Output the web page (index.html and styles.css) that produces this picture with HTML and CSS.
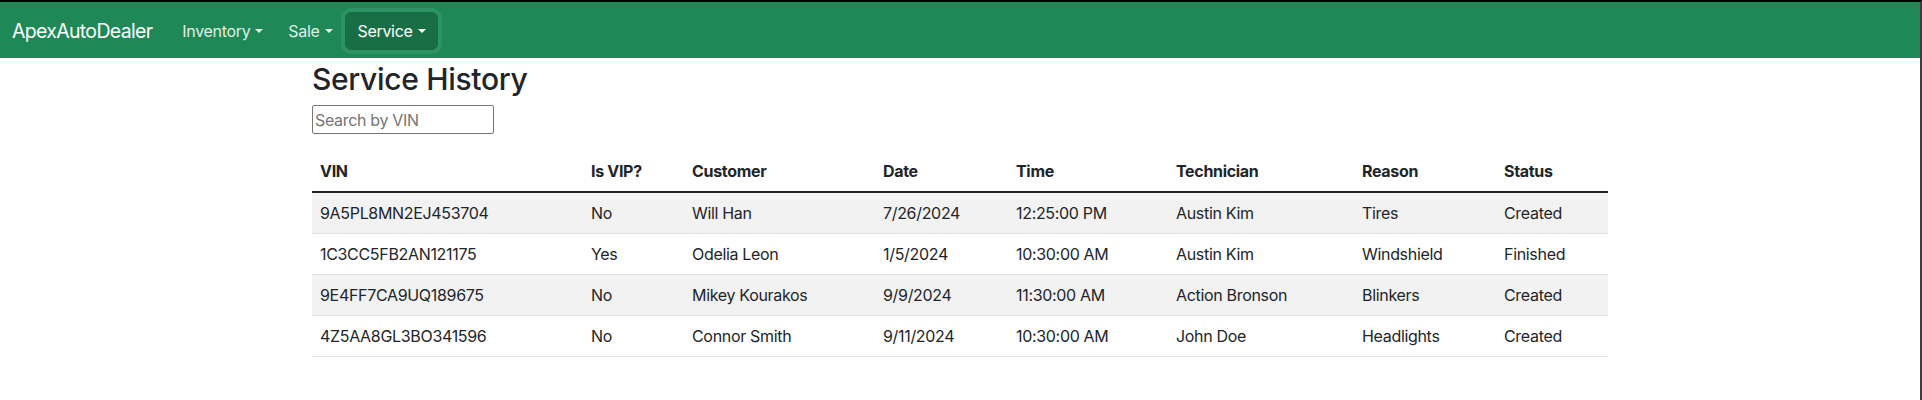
FILE: index.html
```html
<!DOCTYPE html>
<html lang="en">
<head>
<meta charset="utf-8">
<title>ApexAutoDealer - Service History</title>
<link rel="stylesheet" href="styles.css">
</head>
<body class="page">
<nav class="navbar">
  <a class="brand" href="#">ApexAutoDealer</a>
  <ul class="nav">
    <li class="nav-item"><a class="nav-link toggle" href="#">Inventory</a></li>
    <li class="nav-item"><a class="nav-link toggle" href="#">Sale</a></li>
    <li class="nav-item"><button class="nav-btn toggle" type="button">Service</button></li>
  </ul>
</nav>
<main class="container">
  <h1 class="title">Service History</h1>
  <input class="search" type="text" placeholder="Search by VIN">
  <table class="table">
    <colgroup>
      <col class="c-vin"><col class="c-vip"><col class="c-cust"><col class="c-date">
      <col class="c-time"><col class="c-tech"><col class="c-reason"><col class="c-status">
    </colgroup>
    <thead>
      <tr><th>VIN</th><th>Is VIP?</th><th>Customer</th><th>Date</th><th>Time</th><th>Technician</th><th>Reason</th><th>Status</th></tr>
    </thead>
    <tbody>
      <tr class="striped"><td>9A5PL8MN2EJ453704</td><td>No</td><td>Will Han</td><td>7/26/2024</td><td>12:25:00 PM</td><td>Austin Kim</td><td>Tires</td><td>Created</td></tr>
      <tr><td>1C3CC5FB2AN121175</td><td>Yes</td><td>Odelia Leon</td><td>1/5/2024</td><td>10:30:00 AM</td><td>Austin Kim</td><td>Windshield</td><td>Finished</td></tr>
      <tr class="striped"><td>9E4FF7CA9UQ189675</td><td>No</td><td>Mikey Kourakos</td><td>9/9/2024</td><td>11:30:00 AM</td><td>Action Bronson</td><td>Blinkers</td><td>Created</td></tr>
      <tr><td>4Z5AA8GL3BO341596</td><td>No</td><td>Connor Smith</td><td>9/11/2024</td><td>10:30:00 AM</td><td>John Doe</td><td>Headlights</td><td>Created</td></tr>
    </tbody>
  </table>
</main>
</body>
</html>
```
FILE: styles.css
```css
* { box-sizing: border-box; }

html { background: #fff; }

.page {
  margin: 0;
  min-height: 400px;
  border-top: 2px solid #000;
  border-right: 2px solid #3c3c3c;
  font-family: Inter, "Noto Sans", sans-serif;
  font-size: 16px;
  line-height: 1.5;
  letter-spacing: -0.02em;
  color: #212529;
  background: #fff;
}

.navbar {
  display: flex;
  align-items: center;
  height: 56px;
  padding: 9px 12px 7px;
  background: #1e8956;
}

.brand {
  font-size: 19.5px;
  letter-spacing: -0.035em;
  line-height: 30px;
  padding: 5px 0;
  margin-right: 16px;
  color: #fff;
  text-decoration: none;
}

.nav {
  display: flex;
  align-items: center;
  list-style: none;
  margin: 0;
  padding: 0;
}

.nav-link {
  display: block;
  padding: 8px 12.5px;
  color: rgba(255, 255, 255, 0.88);
  text-decoration: none;
  line-height: 24px;
}

.nav-item:first-child .nav-link { padding-left: 14px; }

.nav-btn {
  display: block;
  font: inherit;
  letter-spacing: inherit;
  line-height: 24px;
  padding: 6px 11.5px;
  color: #fff;
  background: #196f45;
  border: 1px solid #186c43;
  border-radius: 6px;
  box-shadow: 0 0 0 4px rgba(58, 158, 110, 0.5);
}

.toggle::after {
  content: "";
  display: inline-block;
  margin-left: 5px;
  vertical-align: 4px;
  border-top: 4.5px solid currentColor;
  border-left: 4px solid transparent;
  border-right: 4px solid transparent;
}

.container {
  width: 1320px;
  margin: 0 auto;
  padding: 0 12px;
}

.title {
  font-size: 30px;
  font-weight: 500;
  line-height: 1.2;
  margin: 3px 0 8px;
}

.search {
  display: block;
  width: 182px;
  height: 29px;
  margin: 0 0 17px;
  padding: 1px 2px;
  font: inherit;
  font-size: 16px;
  letter-spacing: inherit;
  color: #212529;
  border: 1px solid #767676;
  border-radius: 2px;
  background: #fff;
}

.search::placeholder { color: #757575; }

.table {
  width: 1296px;
  border-collapse: collapse;
  table-layout: fixed;
}

.c-vin { width: 271px; }
.c-vip { width: 101px; }
.c-cust { width: 191px; }
.c-date { width: 133px; }
.c-time { width: 160px; }
.c-tech { width: 186px; }
.c-reason { width: 142px; }
.c-status { width: 112px; }

.table th,
.table td {
  text-align: left;
  padding: 8px;
  line-height: 24px;
  border-bottom: 1px solid #dee2e6;
}

.table th {
  font-weight: 700;
  border-bottom: 2px solid #212529;
}

.table .striped td { background: #f2f2f2; }
```
